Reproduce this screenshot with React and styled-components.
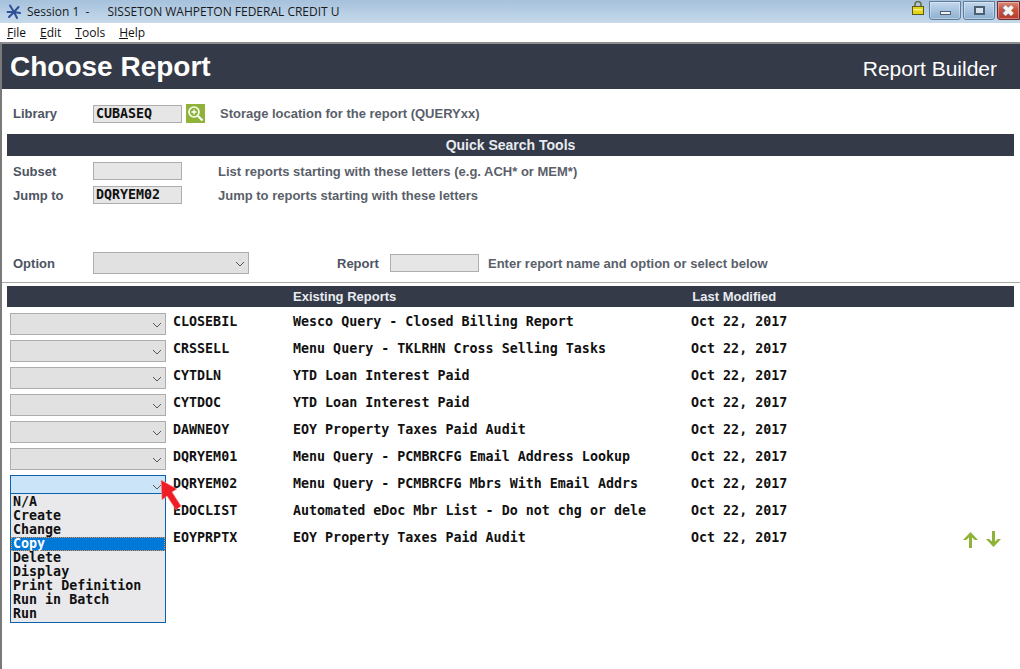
import React from "react";
import styled, { createGlobalStyle } from "styled-components";

const Global = createGlobalStyle`
  html, body { margin: 0; padding: 0; background: #fff; }
  body { width: 1020px; height: 669px; overflow: hidden; font-family: "Liberation Sans", Arial, sans-serif; }
`;
const Page = styled.div`
  position: relative; width: 1020px; height: 669px; overflow: hidden; background: #fff;
  display: flex; flex-direction: column;
`;
const TitleBar = styled.div`
  height: 23px; display: flex; align-items: center; padding-left: 6px; flex: none;
  background: linear-gradient(180deg, #a6c1dc 0%, #b9d0e6 60%, #c6d9ea 100%);
  font: 12px "Open Sans", "Noto Sans", sans-serif; color: #1a1a1a; white-space: pre;
`;
const TitleText = styled.span` margin-left: 5px; `;
const TitleOrg = styled.span` margin-left: 18px; `;
const TitleRight = styled.div`
  margin-left: auto; display: flex; align-items: flex-start; height: 23px;
`;
const WinBtn = styled.div`
  width: ${p => p.$w}px; height: 19px; margin-right: ${p => p.$mr || 0}px; box-sizing: border-box;
  border: 1px solid ${p => p.$close ? "#6b2a30" : "#5f7c9c"}; border-top: 0; border-radius: ${p => p.$close ? "0 0 0 3px" : "0 0 3px 3px"};
  margin-top: 1px; border-top: 1px solid ${p => p.$close ? "#6b2a30" : "#5f7c9c"};
  background: ${p => p.$close ? "linear-gradient(180deg,#d9897a 0%,#c9523f 45%,#b93a2c 100%)" : "linear-gradient(180deg,#c4d8ec 0%,#a9c5e0 45%,#8fb0d0 100%)"};
  box-shadow: inset 0 0 0 1px rgba(255,255,255,.35);
  display: flex; align-items: center; justify-content: center;
`;
const MinGlyph = styled.div` width: 11px; height: 4px; margin-top: 4px; background: #f2f2f2; border: 1px solid #4f5f72; box-sizing: border-box; `;
const MaxGlyph = styled.div` width: 11px; height: 9px; border: 2px solid #4f5f72; background: #d6e2ee; box-sizing: border-box; `;
const CloseGlyph = styled.span` font: bold 15px/1 "Liberation Sans", sans-serif; color: #f4f4f4; text-shadow: 0 0 1px #444; `;
const LockWrap = styled.div` margin: 1px 5px 0 0; height: 14px; `;

const MenuBar = styled.div`
  height: 19px; display: flex; align-items: center; gap: 14px; padding-left: 7px; flex: none;
  font: 12px "Open Sans", "Noto Sans", sans-serif; color: #111;
`;
const MenuItem = styled.span` u { text-decoration: underline; } `;
const Body = styled.div`
  flex: 1; border-left: 2px solid #7a7a7a; border-top: 2px solid #8f8f8f; display: flex; flex-direction: column; min-height: 0;
`;
const Header = styled.div`
  height: 45px; background: #343a47; color: #fff; display: flex; align-items: center; justify-content: space-between; padding: 0 23px 0 8px; flex: none;
`;
const HeaderTitle = styled.div` font: bold 28px "Liberation Sans", Arial, sans-serif; `;
const HeaderSub = styled.div` font: 21px "Liberation Sans", Arial, sans-serif; margin-top: 4px; `;

const Row = styled.div`
  display: flex; align-items: center; height: ${p => p.$h || 18}px; margin-top: ${p => p.$mt || 0}px; padding-left: 11px;
`;
const Label = styled.div`
  width: ${p => p.$w || 80}px; font: bold 13px "Liberation Sans", Arial, sans-serif; color: #4d5462; flex: none;
`;
const Field = styled.div`
  width: ${p => p.$w || 89}px; height: 18px; box-sizing: border-box; background: #e6e6e6; border: 1px solid #adadad; flex: none;
  font: bold 13.33px/16px "DejaVu Sans Mono", "Liberation Mono", monospace; color: #111; padding-left: 2px; letter-spacing: -.03px;
`;
const Hint = styled.div`
  font: bold 13px "Liberation Sans", Arial, sans-serif; color: #5a5f6a; margin-left: ${p => p.$ml || 36}px; white-space: nowrap;
`;
const ZoomBtn = styled.div`
  width: 19px; height: 19px; background: #8fb339; margin-left: 4px; display: flex; align-items: center; justify-content: center; flex: none;
`;
const Band = styled.div`
  margin: ${p => p.$mt || 0}px 6px 0 5px; height: ${p => p.$h || 22}px; background: #343a47; color: #e8ecf2; flex: none;
  font: bold 13px/${p => p.$h || 22}px "Liberation Sans", Arial, sans-serif; position: relative;
`;
const BandCenter = styled.div` text-align: center; font-size: 14px; `;
const BandCols = styled.div` display: flex; padding-left: 286px; `;
const BandModified = styled.div` margin-left: 296px; `;
const Combo = styled.div`
  width: 156px; height: ${p => p.$open ? 22 : 22}px; box-sizing: border-box; flex: none;
  background: ${p => p.$open ? "#cce4f7" : "#e1e1e1"}; border: 1px solid ${p => p.$open ? "#0a62ad" : "#adadad"};
  display: flex; align-items: center; justify-content: flex-end; padding: 2px 3px 0 0;
`;
const Hr = styled.div` height: 1px; background: #a8a8a8; margin-top: 8px; flex: none; `;
const List = styled.div` display: flex; flex-direction: column; margin-top: 3px; `;
const ReportRow = styled.div`
  display: flex; align-items: center; height: 27px; padding-left: 8px; position: relative; box-sizing: border-box;
`;
const Mono = styled.div`
  font: 13.33px/16px "DejaVu Sans Mono", "Liberation Mono", monospace; font-weight: 600; color: #111; white-space: pre;
  width: ${p => p.$w}px; flex: none; margin-left: ${p => p.$ml || 0}px; margin-top: -3px;
`;
const Arrows = styled.div` position: absolute; left: 960px; top: 5px; display: flex; gap: 6px; `;
const Dropdown = styled.div`
  position: absolute; left: 10px; top: 493px; width: 156px; height: 130px; box-sizing: border-box;
  background: #e9e9ec; border: 1px solid #0a62ad; padding-top: 1px;
`;
const Opt = styled.div`
  height: 14px; font: 600 13.33px/14px "DejaVu Sans Mono", "Liberation Mono", monospace; padding-left: 2px; white-space: pre;
  color: ${p => p.$sel ? "#fff" : "#111"}; background: ${p => p.$sel ? "#0078d7" : "transparent"};
  outline: ${p => p.$sel ? "1px dotted #e8913a" : "none"}; outline-offset: -1px;
`;
const Pointer = styled.svg` position: absolute; left: 158px; top: 478px; `;

const Chevron = () => (
  <svg width="10" height="6" viewBox="0 0 10 6"><path d="M1 1l4 4 4-4" fill="none" stroke="#555" strokeWidth="1" /></svg>
);
const Up = () => (
  <svg width="17" height="17" viewBox="0 0 17 17"><path d="M8.5 1L16 9h-3.2L10 6.4V17H7V6.4L4.2 9H1z" fill="#8fb339" /></svg>
);
const Down = () => (
  <svg width="17" height="17" viewBox="0 0 17 17"><path d="M8.5 16L16 8h-3.2L10 10.6V0H7v10.6L4.2 8H1z" fill="#8fb339" /></svg>
);

const rows = [
  ["CLOSEBIL", "Wesco Query - Closed Billing Report"],
  ["CRSSELL", "Menu Query - TKLRHN Cross Selling Tasks"],
  ["CYTDLN", "YTD Loan Interest Paid"],
  ["CYTDOC", "YTD Loan Interest Paid"],
  ["DAWNEOY", "EOY Property Taxes Paid Audit"],
  ["DQRYEM01", "Menu Query - PCMBRCFG Email Address Lookup"],
  ["DQRYEM02", "Menu Query - PCMBRCFG Mbrs With Email Addrs"],
  ["EDOCLIST", "Automated eDoc Mbr List - Do not chg or dele"],
  ["EOYPRPTX", "EOY Property Taxes Paid Audit"],
];
const options = ["N/A", "Create", "Change", "Copy", "Delete", "Display", "Print Definition", "Run in Batch", "Run"];

export default function App() {
  return (
    <Page>
      <Global />
      <TitleBar>
        <svg width="16" height="16" viewBox="0 0 16 16">
          <g stroke="#2f4f96" strokeWidth="2" strokeLinecap="round">
            <path d="M8 8L4 1.5M8 8l4.5-5M8 8l6 1M8 8l3 6M8 8l-5 5M8 8H1.5" />
          </g>
        </svg>
        <TitleText>Session 1  -</TitleText>
        <TitleOrg>SISSETON WAHPETON FEDERAL CREDIT U</TitleOrg>
        <TitleRight>
          <LockWrap>
            <svg width="12" height="14" viewBox="0 0 12 14">
              <path d="M3 6V3.5a3 3 0 0 1 6 0V6" fill="none" stroke="#6d6d3a" strokeWidth="1.6" />
              <rect x="0.5" y="5.5" width="11" height="8" fill="#e3d514" stroke="#5a5a20" />
              <rect x="1.5" y="8" width="9" height="1.5" fill="#f6ee7a" />
            </svg>
          </LockWrap>
          <WinBtn $w={32} $mr={2}><MinGlyph /></WinBtn>
          <WinBtn $w={32} $mr={2}><MaxGlyph /></WinBtn>
          <WinBtn $w={23} $close><CloseGlyph>✖</CloseGlyph></WinBtn>
        </TitleRight>
      </TitleBar>
      <MenuBar>
        <MenuItem><u>F</u>ile</MenuItem>
        <MenuItem><u>E</u>dit</MenuItem>
        <MenuItem><u>T</u>ools</MenuItem>
        <MenuItem><u>H</u>elp</MenuItem>
      </MenuBar>
      <Body>
        <Header>
          <HeaderTitle>Choose Report</HeaderTitle>
          <HeaderSub>Report Builder</HeaderSub>
        </Header>
        <Row $h={19} $mt={15}>
          <Label>Library</Label>
          <Field>CUBASEQ</Field>
          <ZoomBtn>
            <svg width="17" height="17" viewBox="0 0 17 17">
              <circle cx="7" cy="7" r="5" fill="none" stroke="#fff" strokeWidth="1.6" />
              <path d="M7 4.5v5M4.5 7h5" stroke="#fff" strokeWidth="1.3" />
              <path d="M11 11l4.5 4.5" stroke="#fff" strokeWidth="2.2" />
            </svg>
          </ZoomBtn>
          <Hint $ml={15}>Storage location for the report (QUERYxx)</Hint>
        </Row>
        <Band $mt={11}><BandCenter>Quick Search Tools</BandCenter></Band>
        <Row $mt={6}>
          <Label>Subset</Label>
          <Field />
          <Hint>List reports starting with these letters (e.g. ACH* or MEM*)</Hint>
        </Row>
        <Row $mt={6}>
          <Label>Jump to</Label>
          <Field>DQRYEM02</Field>
          <Hint>Jump to reports starting with these letters</Hint>
        </Row>
        <Row $h={22} $mt={48}>
          <Label>Option</Label>
          <Combo><Chevron /></Combo>
          <Label $w={53} style={{ marginLeft: 88 }}>Report</Label>
          <Field />
          <Hint $ml={9}>Enter report name and option or select below</Hint>
        </Row>
        <Hr />
        <Band $mt={3} $h={21}>
          <BandCols>
            <span>Existing Reports</span>
            <BandModified>Last Modified</BandModified>
          </BandCols>
        </Band>
        <List>
          {rows.map(([name, desc], i) => (
            <ReportRow key={name}>
              <Combo $open={i === 6}><Chevron /></Combo>
              <Mono $ml={7} $w={120}>{name}</Mono>
              <Mono $w={398}>{desc}</Mono>
              <Mono $w={120}>Oct 22, 2017</Mono>
              {i === 8 && <Arrows><Up /><Down /></Arrows>}
            </ReportRow>
          ))}
        </List>
      </Body>
      <Dropdown>
        {options.map(o => <Opt key={o} $sel={o === "Copy"}>{o}</Opt>)}
      </Dropdown>
      <Pointer width="26" height="36" viewBox="0 0 26 36">
        <path d="M3 2L19 11l-5 3 9 14-5 4-9-14-5 4z" fill="#ee1c25" stroke="#f4a0a0" strokeWidth=".6" />
      </Pointer>
    </Page>
  );
}
